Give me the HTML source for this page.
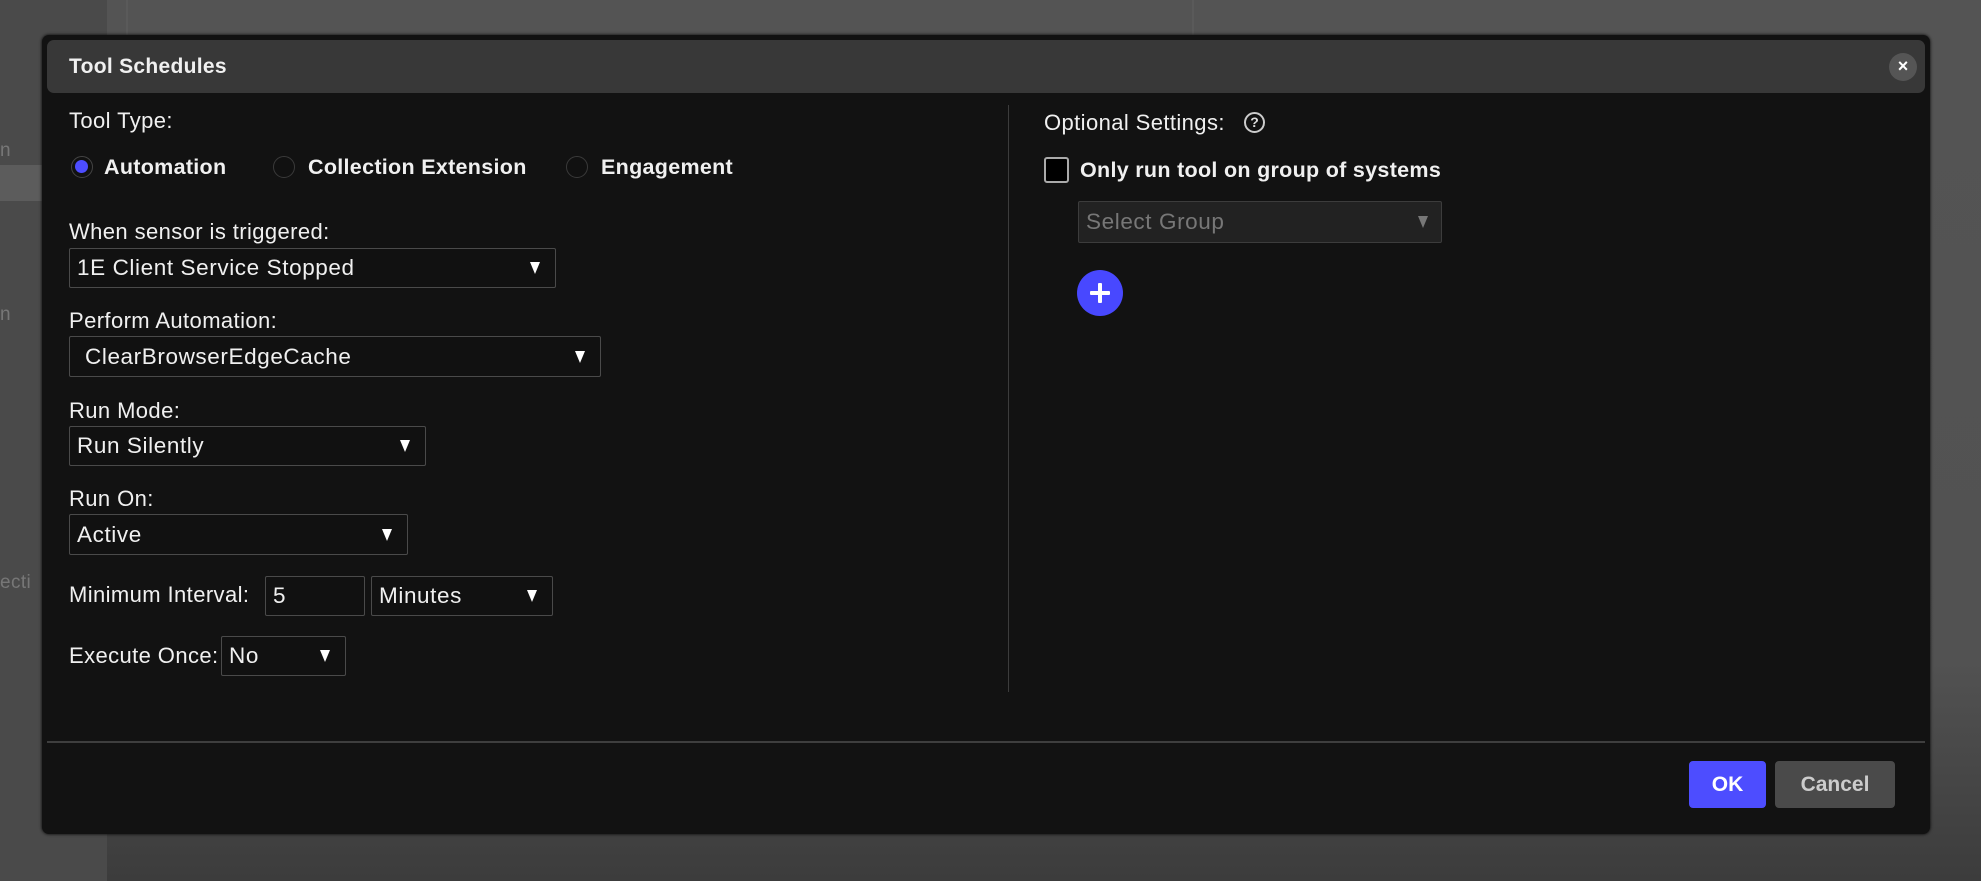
<!DOCTYPE html>
<html><head><meta charset="utf-8"><style>
*{box-sizing:border-box;margin:0;padding:0}
body{width:1981px;height:881px;overflow:hidden;background:#4f4f4f;font-family:"Liberation Sans",sans-serif;color:#f0f0f0;position:relative}
.bg1{position:absolute;left:0;top:0;width:1981px;height:881px;background:linear-gradient(#545454 0,#525252 75%,#3c3c3c 100%)}
.strip{position:absolute;left:0;top:0;width:107px;height:881px;background:#4a4a4a}
.vl{position:absolute;top:0;width:2px;height:40px;background:#5a5a5a}
.dlg{position:absolute;left:42px;top:35px;width:1888px;height:799px;background:#121212;border-radius:7px;box-shadow:0 0 3px #000}
.hdr{position:absolute;left:5px;top:5px;width:1878px;height:53px;background:#383838;border-radius:7px}
.t{position:absolute;white-space:nowrap;font-size:22px;line-height:26px;letter-spacing:0.4px}
.b{font-weight:bold;font-size:21.5px;letter-spacing:0.3px}
.sel{position:absolute;border:1px solid #4a4a4a;background:#111;border-radius:2px}
.sel span{position:absolute;left:7px;top:50%;transform:translateY(-50%);font-size:22.5px;letter-spacing:0.6px;white-space:nowrap}
.arr{position:absolute;top:50%;transform:translateY(-50%);width:0;height:0;border-left:5px solid transparent;border-right:5px solid transparent;border-top:12px solid #fff}
.radio{position:absolute;width:22px;height:22px;border-radius:50%;border:1.5px solid #3a3a3a;background:#111}
</style></head><body>
<div class="bg1"></div>
<div class="strip"></div>
<div class="vl" style="left:126px"></div>
<div class="vl" style="left:1192px"></div>
<div class="t" style="left:0;top:138px;color:#777;font-size:19px">n</div>
<div style="position:absolute;left:0;top:165px;width:42px;height:36px;background:#5c5c5c"></div>
<div class="t" style="left:0;top:302px;color:#777;font-size:19px">n</div>
<div class="t" style="left:0;top:570px;color:#777;font-size:19px">ecti</div>
<div class="dlg">
 <div class="hdr"></div>
 <div class="t b" style="left:27px;top:19px;font-size:21px">Tool Schedules</div>
 <div style="position:absolute;left:1847px;top:18px;width:28px;height:28px;border-radius:50%;background:#555;color:#fff;font-weight:bold;font-size:18px;text-align:center;line-height:27px">×</div>

 <div class="t" style="left:27px;top:73px">Tool Type:</div>
 <div class="radio" style="left:29px;top:121px;border-color:#444"><div style="position:absolute;left:3px;top:3px;width:13px;height:13px;border-radius:50%;background:#4d4dff"></div></div>
 <div class="t b" style="left:62px;top:119px">Automation</div>
 <div class="radio" style="left:231px;top:121px"></div>
 <div class="t b" style="left:266px;top:119px">Collection Extension</div>
 <div class="radio" style="left:524px;top:121px"></div>
 <div class="t b" style="left:559px;top:119px">Engagement</div>

 <div class="t" style="left:27px;top:184px">When sensor is triggered:</div>
 <div class="sel" style="left:27px;top:213px;width:487px;height:40px"><span>1E Client Service Stopped</span><i class="arr" style="right:15px"></i></div>

 <div class="t" style="left:27px;top:273px">Perform Automation:</div>
 <div class="sel" style="left:27px;top:301px;width:532px;height:41px"><span style="left:15px">ClearBrowserEdgeCache</span><i class="arr" style="right:15px"></i></div>

 <div class="t" style="left:27px;top:363px">Run Mode:</div>
 <div class="sel" style="left:27px;top:391px;width:357px;height:40px"><span>Run Silently</span><i class="arr" style="right:15px"></i></div>

 <div class="t" style="left:27px;top:451px">Run On:</div>
 <div class="sel" style="left:27px;top:479px;width:339px;height:41px"><span>Active</span><i class="arr" style="right:15px"></i></div>

 <div class="t" style="left:27px;top:547px">Minimum Interval:</div>
 <div class="sel" style="left:223px;top:541px;width:100px;height:40px"><span>5</span></div>
 <div class="sel" style="left:329px;top:541px;width:182px;height:40px"><span>Minutes</span><i class="arr" style="right:15px"></i></div>

 <div class="t" style="left:27px;top:608px">Execute Once:</div>
 <div class="sel" style="left:179px;top:601px;width:125px;height:40px"><span>No</span><i class="arr" style="right:15px"></i></div>

 <div style="position:absolute;left:966px;top:70px;width:1px;height:587px;background:#3c3c3c"></div>

 <div class="t" style="left:1002px;top:75px">Optional Settings:</div>
 <div style="position:absolute;left:1202px;top:77px;width:21px;height:21px;border-radius:50%;border:2px solid #ccc;color:#ddd;font-size:14px;font-weight:bold;text-align:center;line-height:17px">?</div>
 <div style="position:absolute;left:1002px;top:122px;width:25px;height:26px;border:2px solid #aaa;border-radius:3px;background:#000"></div>
 <div class="t b" style="left:1038px;top:122px">Only run tool on group of systems</div>
 <div class="sel" style="left:1036px;top:166px;width:364px;height:42px;background:#222;border-color:#3c3c3c"><span style="color:#777">Select Group</span><i class="arr" style="right:13px;border-top-color:#777"></i></div>
 <div style="position:absolute;left:1035px;top:235px;width:46px;height:46px;border-radius:50%;background:#4848ff"></div>
 <div style="position:absolute;left:1048px;top:256px;width:20px;height:4px;background:#fff;border-radius:1px"></div>
 <div style="position:absolute;left:1056px;top:248px;width:4px;height:20px;background:#fff;border-radius:1px"></div>

 <div style="position:absolute;left:5px;top:706px;width:1878px;height:2px;background:#3e3e3e"></div>
 <div style="position:absolute;left:1647px;top:726px;width:77px;height:47px;background:#4d4dff;border-radius:4px;color:#fff;font-weight:bold;font-size:21px;text-align:center;line-height:47px">OK</div>
 <div style="position:absolute;left:1733px;top:726px;width:120px;height:47px;background:#4a4a4a;border-radius:4px;color:#ccc;font-weight:bold;font-size:21px;text-align:center;line-height:47px">Cancel</div>
</div>
</body></html>
